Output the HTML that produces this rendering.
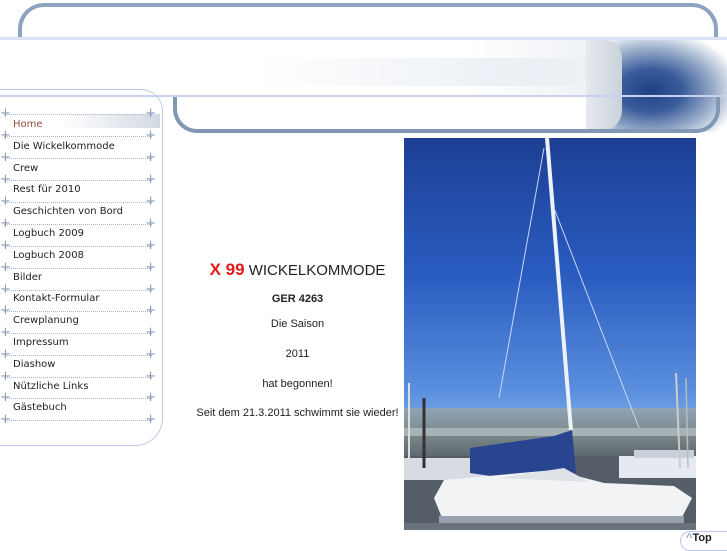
<!DOCTYPE html>
<html><head><meta charset="utf-8"><style>
body{margin:0;width:727px;height:545px;background:#fff;position:relative;overflow:hidden;font-family:"DejaVu Sans","Liberation Sans",sans-serif}
.abs{position:absolute}
.menu a{position:absolute;left:13px;font-size:10px;color:#222;text-decoration:none;white-space:nowrap}
.sep{position:absolute;left:4px;width:148px;height:0;border-top:1px dotted #a9b4cc}
.sep:before,.sep:after{content:"+";position:absolute;top:-9px;font-size:13px;color:#8a9ab8;line-height:16px}
.sep:before{left:-4px}.sep:after{right:-4px}
.c{position:absolute;left:190px;width:215px;text-align:center;font-family:"Liberation Sans",sans-serif;font-size:11px;color:#222}
</style></head><body>
<!-- top rounded bar -->
<div class="abs" style="left:18px;top:3px;width:700px;height:34px;border:4px solid #8ea3bf;border-bottom:none;border-radius:26px 26px 0 0;box-sizing:border-box"></div>
<div class="abs" style="left:0;top:37px;width:727px;height:3px;background:#dde3f5"></div>
<!-- header image band -->
<div class="abs" style="left:260px;top:58px;width:330px;height:28px;background:linear-gradient(90deg,rgba(255,255,255,1) 0%,rgba(232,237,243,.8) 70%,#e2e7ee 100%);border-radius:0 0 18px 0"></div>
<div class="abs" style="left:470px;top:40px;width:120px;height:56px;background:linear-gradient(90deg,rgba(255,255,255,0),#eef1f5)"></div>
<div class="abs" style="left:600px;top:40px;width:127px;height:92px;background:radial-gradient(ellipse at 40% 55%,#1f3f85 0%,#3b5c9b 30%,#9fb2cd 60%,#fff 85%)"></div>
<div class="abs" style="left:586px;top:40px;width:36px;height:92px;background:linear-gradient(90deg,#e6eaee,#c9d2dc);border-radius:0 18px 22px 0"></div>
<div class="abs" style="left:0;top:95px;width:727px;height:2px;background:#c9d1f0"></div>
<!-- second rounded box -->
<div class="abs" style="left:173px;top:97px;width:547px;height:36px;border:4px solid #8197b6;border-top:none;border-radius:0 0 24px 24px;box-sizing:border-box"></div>
<!-- sidebar -->
<div class="abs" style="left:-20px;top:89px;width:183px;height:357px;border:1px solid #b9c7ea;border-radius:0 22px 28px 0;box-sizing:border-box"></div>
<div class="abs" style="left:60px;top:114px;width:100px;height:14px;background:linear-gradient(90deg,rgba(255,255,255,0),#d3dae3)"></div>
<div class="menu">
<div class="sep" style="top:114px"></div><a style="top:119px;color:#9b4a40">Home</a>
<div class="sep" style="top:136px"></div><a style="top:141px">Die Wickelkommode</a>
<div class="sep" style="top:158px"></div><a style="top:163px">Crew</a>
<div class="sep" style="top:180px"></div><a style="top:184px">Rest für 2010</a>
<div class="sep" style="top:202px"></div><a style="top:206px">Geschichten von Bord</a>
<div class="sep" style="top:224px"></div><a style="top:228px">Logbuch 2009</a>
<div class="sep" style="top:246px"></div><a style="top:250px">Logbuch 2008</a>
<div class="sep" style="top:268px"></div><a style="top:272px">Bilder</a>
<div class="sep" style="top:290px"></div><a style="top:293px">Kontakt-Formular</a>
<div class="sep" style="top:311px"></div><a style="top:315px">Crewplanung</a>
<div class="sep" style="top:333px"></div><a style="top:337px">Impressum</a>
<div class="sep" style="top:355px"></div><a style="top:359px">Diashow</a>
<div class="sep" style="top:377px"></div><a style="top:381px">Nützliche Links</a>
<div class="sep" style="top:398px"></div><a style="top:402px">Gästebuch</a>
<div class="sep" style="top:420px"></div>
</div>
<!-- center text -->
<div class="c" style="top:260px;font-size:15px"><b style="color:#e21a1a;font-size:17px">X 99</b> WICKELKOMMODE</div>
<div class="c" style="top:293px"><b>GER 4263</b></div>
<div class="c" style="top:318px">Die Saison</div>
<div class="c" style="top:348px">2011</div>
<div class="c" style="top:378px">hat begonnen!</div>
<div class="c" style="top:407px">Seit dem 21.3.2011 schwimmt sie wieder!</div>
<!-- photo -->
<svg class="abs" style="left:404px;top:138px" width="292" height="392" viewBox="0 0 292 392">
<defs><linearGradient id="sky" x1="0" y1="0" x2="0" y2="1">
<stop offset="0" stop-color="#1c3f94"/><stop offset=".35" stop-color="#2a5cc0"/><stop offset=".65" stop-color="#5a90de"/><stop offset=".75" stop-color="#88b0e8"/></linearGradient>
<linearGradient id="h" x1="0" y1="0" x2="0" y2="1">
<stop offset="0" stop-color="#8ea4b8"/><stop offset=".5" stop-color="#7d8a88"/><stop offset="1" stop-color="#5c6670"/></linearGradient></defs>
<rect width="292" height="392" fill="url(#sky)"/>
<rect y="270" width="292" height="50" fill="url(#h)"/>
<rect y="290" width="292" height="8" fill="#b8c3c8" opacity=".7"/>
<rect y="318" width="292" height="74" fill="#555e68"/>
<rect x="0" y="320" width="90" height="22" fill="#d8dce2"/>
<rect x="215" y="318" width="77" height="22" fill="#e6eaf0"/>
<rect x="230" y="312" width="60" height="8" fill="#c9d0da"/>
<path d="M66 310 L150 298 L168 292 L172 335 L100 340 L66 335Z" fill="#2a4590"/>
<path d="M40 342 L150 332 L200 345 L270 348 L288 360 L275 385 L40 385 L30 360Z" fill="#f2f3f5"/>
<path d="M95 340 L160 330 L185 344Z" fill="#dfe3e8"/>
<rect x="35" y="378" width="245" height="7" fill="#9aa2ad"/>
<rect x="0" y="385" width="292" height="7" fill="#6a727c"/>
<line x1="143" y1="0" x2="167" y2="292" stroke="#eef2f8" stroke-width="4"/>
<line x1="140" y1="10" x2="95" y2="260" stroke="#c9d6ef" stroke-width="1"/>
<line x1="150" y1="70" x2="235" y2="290" stroke="#c9d6ef" stroke-width="1"/>
<line x1="272" y1="235" x2="276" y2="330" stroke="#ccc" stroke-width="2"/>
<line x1="282" y1="240" x2="284" y2="330" stroke="#bbb" stroke-width="1.5"/>
<line x1="5" y1="245" x2="5" y2="330" stroke="#ddd" stroke-width="2"/>
<line x1="20" y1="260" x2="20" y2="330" stroke="#333" stroke-width="3"/>
</svg>
<!-- top button -->
<div class="abs" style="left:680px;top:531px;width:60px;height:20px;border:1px solid #b9c7ea;border-radius:10px;box-sizing:border-box"></div>
<div class="abs" style="left:686px;top:532px;font-family:'Liberation Sans',sans-serif;font-weight:bold;font-size:11px;color:#222"><span style="color:#9aa6bd">^</span>Top</div>
</body></html>
